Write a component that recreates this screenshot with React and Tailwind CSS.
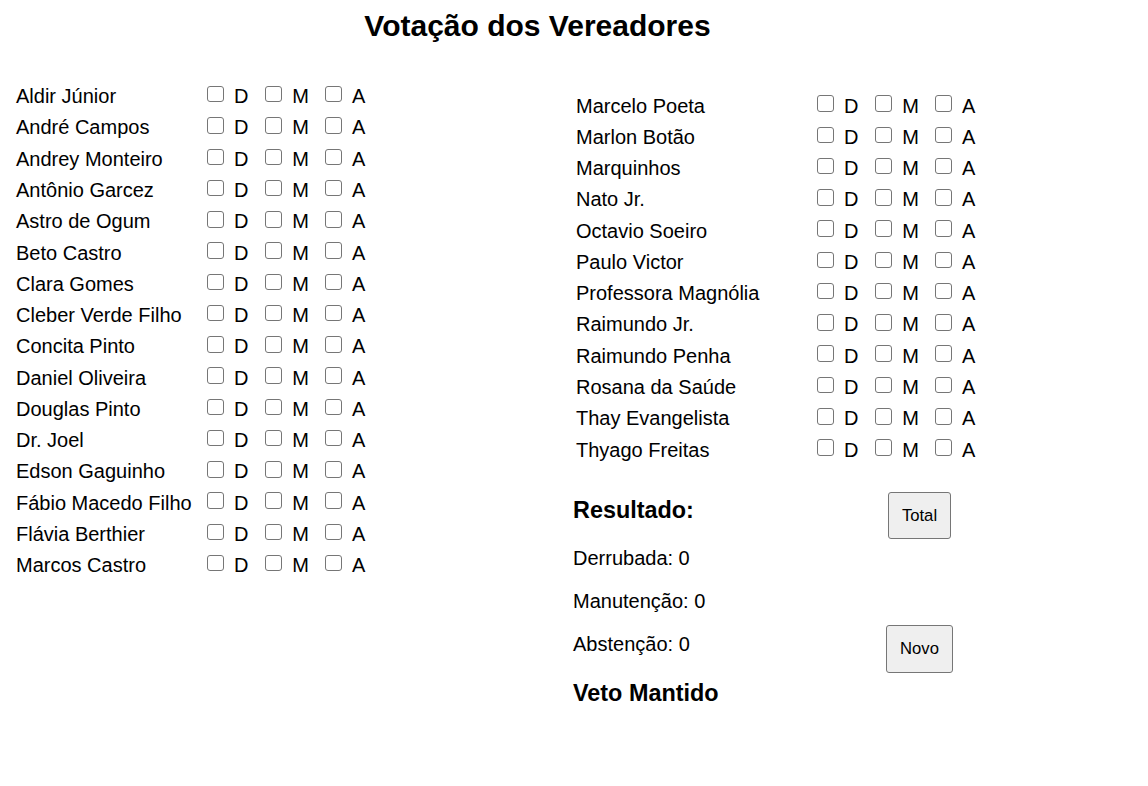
import React from "react";

const LEFT = [
  "Aldir Júnior",
  "André Campos",
  "Andrey Monteiro",
  "Antônio Garcez",
  "Astro de Ogum",
  "Beto Castro",
  "Clara Gomes",
  "Cleber Verde Filho",
  "Concita Pinto",
  "Daniel Oliveira",
  "Douglas Pinto",
  "Dr. Joel",
  "Edson Gaguinho",
  "Fábio Macedo Filho",
  "Flávia Berthier",
  "Marcos Castro",
];

const RIGHT = [
  "Marcelo Poeta",
  "Marlon Botão",
  "Marquinhos",
  "Nato Jr.",
  "Octavio Soeiro",
  "Paulo Victor",
  "Professora Magnólia",
  "Raimundo Jr.",
  "Raimundo Penha",
  "Rosana da Saúde",
  "Thay Evangelista",
  "Thyago Freitas",
];

function Box() {
  return (
    <span className="inline-block w-[16.5px] h-[16.5px] mb-[5px] shrink-0 rounded-[3px] border border-[#767676] bg-white" />
  );
}

function Choices() {
  return (
    <div className="flex items-center">
      <Box />
      <span className="ml-[10.5px] mr-[16.7px]">D</span>
      <Box />
      <span className="ml-[10.5px] mr-[16.5px]">M</span>
      <Box />
      <span className="ml-[10.2px]">A</span>
    </div>
  );
}

function Row({ name, nameClass }) {
  return (
    <div className="flex items-center h-[31.27px] text-[20px] leading-[23px]">
      <span className={nameClass}>{name}</span>
      <Choices />
    </div>
  );
}

export default function App() {
  return (
    <div className="w-[1148px] h-[786px] bg-white text-black font-['Liberation_Sans',Arial,sans-serif]">
      <h1 className="w-[1075px] pt-[9px] text-center text-[30px] leading-[34.5px] font-bold">
        Votação dos Vereadores
      </h1>
      <div className="flex mt-[37.6px]">
        <div className="w-[573px] pl-[16px]">
          {LEFT.map((n) => (
            <Row key={n} name={n} nameClass="w-[191px] shrink-0" />
          ))}
        </div>
        <div className="pt-[9.4px]">
          {RIGHT.map((n) => (
            <Row key={n} name={n} nameClass="w-[244px] pl-[3px] shrink-0" />
          ))}
          <div className="flex mt-[26px]">
            <div className="w-[313px] pt-[5.4px]">
              <h3 className="text-[23.4px] leading-[26.9px] font-bold">Resultado:</h3>
              <p className="mt-[23.4px] text-[20px] leading-[23px]">Derrubada: 0</p>
              <p className="mt-[20px] text-[20px] leading-[23px]">Manutenção: 0</p>
              <p className="mt-[20px] text-[20px] leading-[23px]">Abstenção: 0</p>
              <h3 className="mt-[23.4px] text-[23.4px] leading-[26.9px] font-bold">Veto Mantido</h3>
            </div>
            <div className="w-[67px] flex flex-col items-center">
              <button className="w-[63.5px] h-[47.5px] bg-[#efefef] border border-[#767676] rounded-[3px] text-[16.67px] leading-[19px]">
                Total
              </button>
              <button className="mt-[85.8px] w-[67px] h-[48px] bg-[#efefef] border border-[#767676] rounded-[3px] text-[16.67px] leading-[19px]">
                Novo
              </button>
            </div>
          </div>
        </div>
      </div>
    </div>
  );
}
